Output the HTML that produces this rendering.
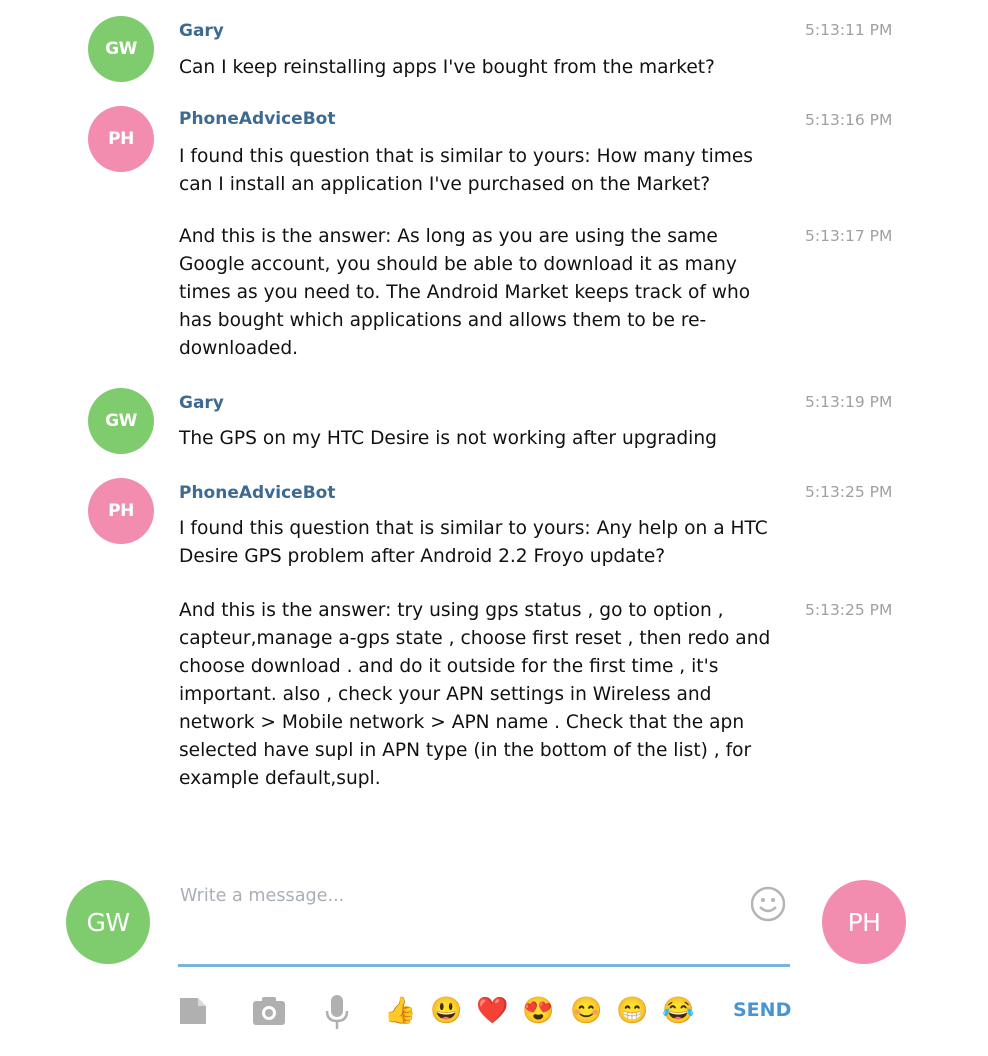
<!DOCTYPE html>
<html><head><meta charset="utf-8"><style>
body{margin:0;width:988px;height:1056px;background:#fff;position:relative;font-family:"DejaVu Sans","Liberation Sans",sans-serif;overflow:hidden}
.av{position:absolute;width:66px;height:66px;border-radius:50%;color:#fff;font-weight:bold;font-size:17px;display:flex;align-items:center;justify-content:center;letter-spacing:-0.5px}
.g{background:#7fcc6f}.p{background:#f28daf}
.n{position:absolute;left:179px;color:#3d6a93;font-weight:bold;font-size:17px;white-space:nowrap}
.t{position:absolute;left:179px;font-size:18.6px;line-height:28px;color:#111;white-space:nowrap}
.ts{position:absolute;left:805px;font-size:15.5px;color:#a0a0a0;white-space:nowrap}
.e{position:absolute;top:996px;font-size:26px;line-height:30px;font-family:"Noto Color Emoji",sans-serif}
</style></head><body>
<div class="av g" style="left:88px;top:16px">GW</div>
<div class="n" style="top:21px">Gary</div>
<div class="t" style="top:54px">Can I keep reinstalling apps I've bought from the market?</div>
<div class="ts" style="top:21px">5:13:11 PM</div>

<div class="av p" style="left:88px;top:106px">PH</div>
<div class="n" style="top:109px">PhoneAdviceBot</div>
<div class="t" style="top:143px">I found this question that is similar to yours: How many times<br>can I install an application I've purchased on the Market?</div>
<div class="ts" style="top:111px">5:13:16 PM</div>
<div class="t" style="top:223px">And this is the answer: As long as you are using the same<br>Google account, you should be able to download it as many<br>times as you need to. The Android Market keeps track of who<br>has bought which applications and allows them to be re-<br>downloaded.</div>
<div class="ts" style="top:227px">5:13:17 PM</div>

<div class="av g" style="left:88px;top:388px">GW</div>
<div class="n" style="top:393px">Gary</div>
<div class="t" style="top:425px">The GPS on my HTC Desire is not working after upgrading</div>
<div class="ts" style="top:393px">5:13:19 PM</div>

<div class="av p" style="left:88px;top:478px">PH</div>
<div class="n" style="top:483px">PhoneAdviceBot</div>
<div class="t" style="top:515px">I found this question that is similar to yours: Any help on a HTC<br>Desire GPS problem after Android 2.2 Froyo update?</div>
<div class="ts" style="top:483px">5:13:25 PM</div>
<div class="t" style="top:597px">And this is the answer: try using gps status , go to option ,<br>capteur,manage a-gps state , choose first reset , then redo and<br>choose download . and do it outside for the first time , it's<br>important. also , check your APN settings in Wireless and<br>network &gt; Mobile network &gt; APN name . Check that the apn<br>selected have supl in APN type (in the bottom of the list) , for<br>example default,supl.</div>
<div class="ts" style="top:601px">5:13:25 PM</div>

<div class="av g" style="left:66px;top:880px;width:84px;height:84px;font-size:25px;font-weight:normal">GW</div>
<div class="av p" style="left:822px;top:880px;width:84px;height:84px;font-size:25px;font-weight:normal">PH</div>
<div style="position:absolute;left:180px;top:886px;font-size:17.6px;color:#a9afb6">Write a message...</div>
<svg style="position:absolute;left:750px;top:886px" width="36" height="36" viewBox="0 0 36 36"><circle cx="18" cy="18" r="16" fill="none" stroke="#b5b5b5" stroke-width="2.5"/><circle cx="13" cy="14" r="2" fill="#b5b5b5"/><circle cx="23" cy="14" r="2" fill="#b5b5b5"/><path d="M10 21q8 8 16 0" fill="none" stroke="#b5b5b5" stroke-width="2.5"/></svg>
<div style="position:absolute;left:178px;top:964px;width:612px;height:3px;background:#7ab3dd"></div>

<svg style="position:absolute;left:178px;top:996px" width="30" height="30" viewBox="0 0 30 30"><path d="M2 2h18l8 8v18H2z" fill="#b0b0b0"/><path d="M20 2v8h8" fill="#fff" opacity=".5"/></svg>
<svg style="position:absolute;left:252px;top:996px" width="34" height="30" viewBox="0 0 34 30"><rect x="1" y="5" width="32" height="24" rx="3" fill="#b0b0b0"/><rect x="10" y="1" width="14" height="6" rx="2" fill="#b0b0b0"/><circle cx="17" cy="17" r="7" fill="#fff"/><circle cx="17" cy="17" r="4" fill="#b0b0b0"/></svg>
<svg style="position:absolute;left:322px;top:994px" width="30" height="36" viewBox="0 0 30 36"><rect x="9" y="1" width="12" height="22" rx="6" fill="#b0b0b0"/><path d="M5 17q0 10 10 10q10 0 10-10" fill="none" stroke="#b0b0b0" stroke-width="2.5"/><path d="M15 27v8" stroke="#b0b0b0" stroke-width="2.5"/></svg>
<div class="e" style="left:384px">👍</div>
<div class="e" style="left:430px">😃</div>
<div class="e" style="left:476px">❤️</div>
<div class="e" style="left:522px">😍</div>
<div class="e" style="left:570px">😊</div>
<div class="e" style="left:616px">😁</div>
<div class="e" style="left:662px">😂</div>
<div style="position:absolute;left:733px;top:999px;font-size:19px;font-weight:bold;color:#4a95d1">SEND</div>
</body></html>
